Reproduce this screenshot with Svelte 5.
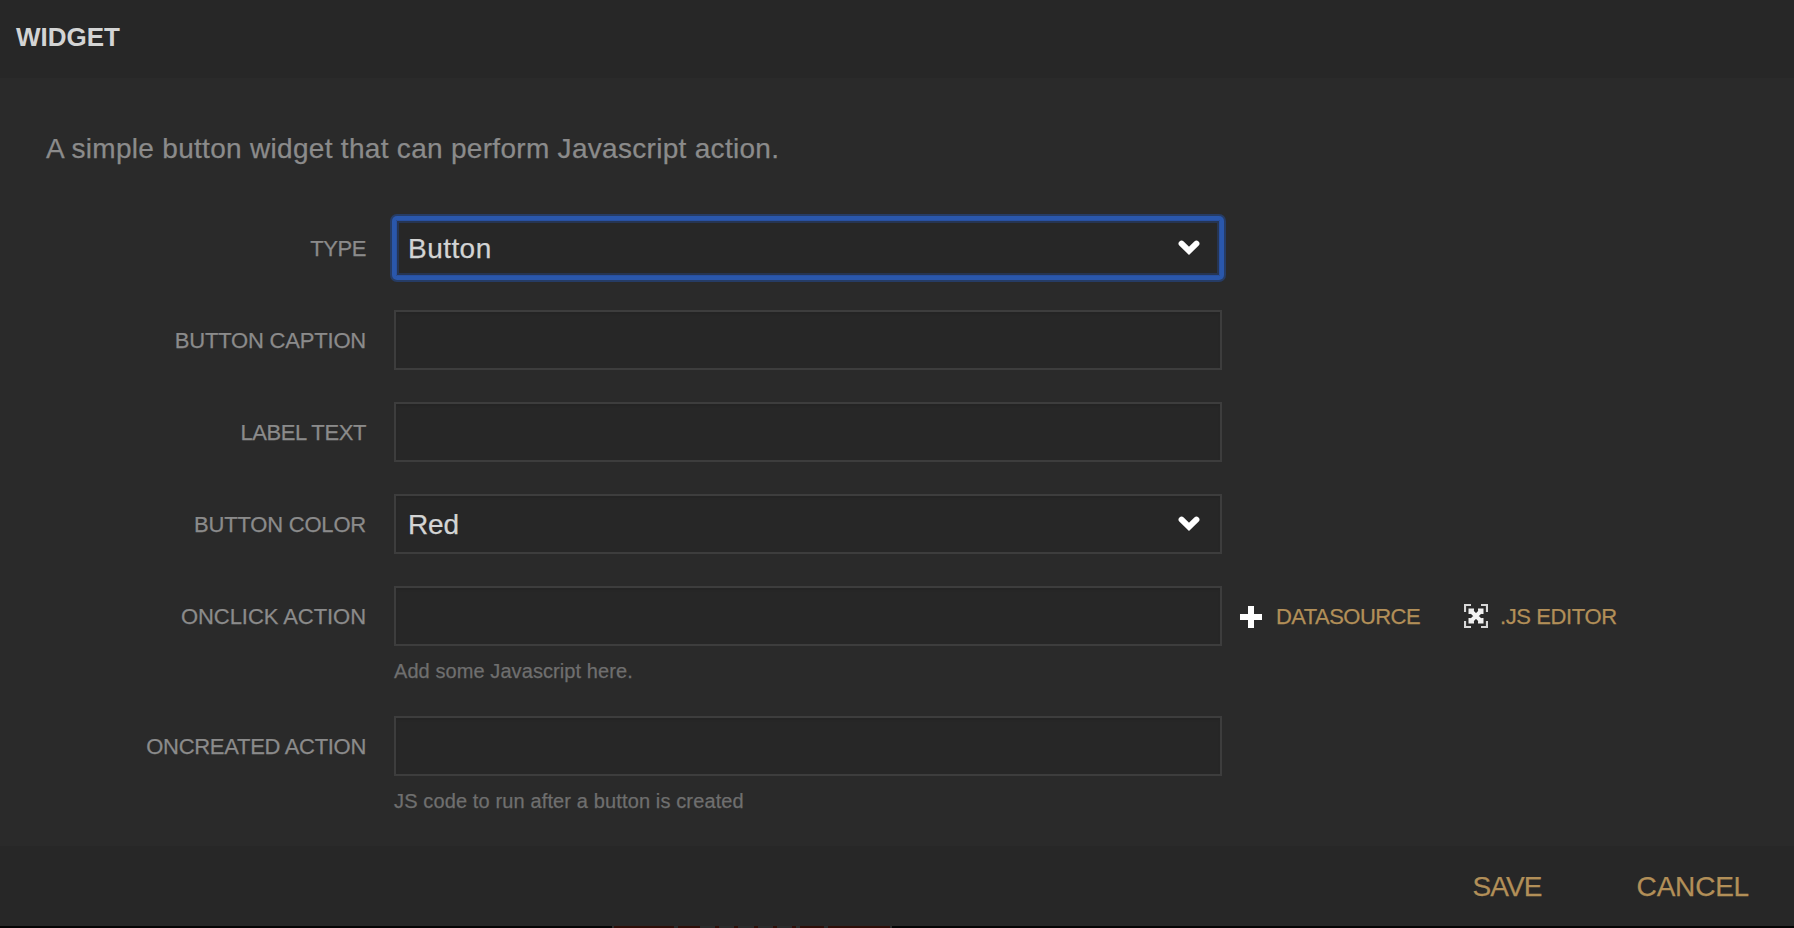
<script>
  const fields = [
    { label: 'TYPE', track: -0.4, select: true, value: 'Button', valueTrack: 0.45, focused: true },
    { label: 'BUTTON CAPTION', track: -0.2 },
    { label: 'LABEL TEXT', track: -0.4 },
    { label: 'BUTTON COLOR', track: -0.2, select: true, value: 'Red', valueTrack: -0.1 },
    { label: 'ONCLICK ACTION', track: -0.05, help: 'Add some Javascript here.', helpTrack: 0.08, tools: true },
    { label: 'ONCREATED ACTION', track: -0.3, help: 'JS code to run after a button is created', helpTrack: 0.13 }
  ];
</script>

<div class="dialog">
  <header><h2>WIDGET</h2></header>

  <main>
    <p class="description">A simple button widget that can perform Javascript action.</p>
    {#each fields as f}
      <div class="row" class:with-help={f.help}>
        <span class="label" style="letter-spacing: {f.track}px">{f.label}</span>
        <div class="control">
          <div class="box" class:focused={f.focused}>
            {#if f.select}
              <span class="value" style="letter-spacing: {f.valueTrack}px">{f.value}</span>
              <svg class="chevron" width="24" height="18" viewBox="0 0 24 18">
                <path d="M4.600 4.600 L12 11.800 L19.400 4.600" fill="none" stroke="#fff" stroke-width="6" stroke-linecap="round" />
              </svg>
            {/if}
          </div>
          {#if f.help}<div class="help" style="letter-spacing: {f.helpTrack}px">{f.help}</div>{/if}
        </div>
        {#if f.tools}
          <div class="tools">
            <span class="tool">
              <svg class="plus" width="24" height="24" viewBox="0 0 24 24">
                <path d="M9 1h6v8h8v6h-8v8H9v-8H1V9h8z" fill="#fff" />
              </svg>
              <span class="datasource">DATASOURCE</span>
            </span>
            <span class="tool editor">
              <svg width="24" height="24" viewBox="0 0 24 24">
                <path d="M1 8V1h6M17 1h6v7M23 17v6h-6M7 23H1v-6" fill="none" stroke="#d8d8d8" stroke-width="2.200" />
                <path d="M7 7 17 17M17 7 7 17" stroke="#f4f4f4" stroke-width="4" />
                <path d="M4.500 4.500h5.500v2L6.500 10h-2zM19.500 4.500v5.500h-2L14 6.500v-2zM19.500 19.500H14v-2l3.500-3.500h2zM4.500 19.500V14h2l3.500 3.500v2z" fill="#f0f0f0" />
              </svg>
              <span class="js">.JS EDITOR</span>
            </span>
          </div>
        {/if}
      </div>
    {/each}
  </main>

  <footer>
    <span class="save">SAVE</span>
    <span class="cancel">CANCEL</span>
  </footer>
  <div class="backdrop"><div class="pane"></div></div>
</div>

<style>
  :global(body) {
    margin: 0;
    background: #000;
    overflow: hidden;
  }
  .dialog {
    width: 1794px;
    height: 928px;
    display: flex;
    flex-direction: column;
    background: #2a2a2a;
    color: #8b8b8b;
    font-family: "Liberation Sans", Arial, sans-serif;
    -webkit-text-stroke: 0.25px currentColor;
  }
  header {
    height: 78px;
    box-sizing: border-box;
    padding: 21px 0 0 16px;
    background: #272727;
  }
  h2 {
    margin: 0;
    font-size: 26px;
    line-height: 32px;
    color: #d3d4d4;
    -webkit-text-stroke: 0;
  }
  main {
    height: 768px;
    box-sizing: border-box;
  }
  .description {
    margin: 0;
    padding: 55px 0 0 46px;
    height: 85px;
    font-size: 28px;
    line-height: 32px;
    letter-spacing: 0.3px;
  }
  .row {
    display: flex;
    height: 92px;
  }
  .row.with-help {
    height: 130px;
  }
  .label {
    width: 366px;
    margin-right: 28px;
    font-size: 22px;
    line-height: 62px;
    text-align: right;
    white-space: nowrap;
  }
  .control {
    width: 828px;
  }
  .box {
    height: 60px;
    box-sizing: border-box;
    display: flex;
    align-items: center;
    justify-content: space-between;
    border: 2px solid #3d3d3d;
    background: #272727;
    padding: 0 19px 0 12px;
    font-size: 28px;
    line-height: 32px;
    color: #d3d4d4;
    box-shadow: inset 0 2px 2px rgba(0, 0, 0, 0.08);
  }
  .value {
    padding-top: 2px;
  }
  .box.focused {
    border-color: #2a57ab;
    box-shadow: 0 0 0 2px #2a57ab, 0 0 0 4px #263c65, inset 0 0 0 1px #2850a0, inset 0 0 0 3px #263553;
    border-radius: 3px;
  }
  .help {
    margin-top: 13px;
    font-size: 20px;
    line-height: 24px;
    color: #6f6f6f;
  }
  .tools {
    display: flex;
    height: 60px;
    align-items: center;
    padding-left: 17px;
    font-size: 22px;
    color: #b28f58;
  }
  .tool {
    display: flex;
    align-items: center;
    gap: 13px;
  }
  .plus {
    margin-top: 2px;
  }
  .tool.editor {
    margin-left: 43px;
    gap: 12px;
  }
  .datasource {
    width: 145px;
    padding-top: 1px;
    letter-spacing: -0.55px;
  }
  .js {
    padding-top: 1px;
    letter-spacing: -0.4px;
  }
  footer {
    height: 80px;
    display: flex;
    align-items: center;
    justify-content: flex-end;
    gap: 95px;
    padding-right: 45px;
    background: #272727;
    font-size: 28px;
    color: #b28f58;
  }
  .save {
    padding-top: 1px;
    letter-spacing: -0.9px;
  }
  .cancel {
    padding-top: 1px;
    letter-spacing: -0.2px;
  }
  .backdrop {
    height: 2px;
    padding-left: 612px;
    background: #040404;
  }
  .pane {
    width: 280px;
    height: 2px;
    background: linear-gradient(90deg, #2b2b2b 2px, #2e0e08 2px 62px, #2b2b2b 62px 66px, #2e0e08 66px 88px, #2b2b2b 88px 103px, #2e0e08 103px 107px, #2b2b2b 107px 122px, #2e0e08 122px 126px, #2b2b2b 126px 142px, #2e0e08 142px 146px, #2b2b2b 146px 161px, #2e0e08 161px 165px, #2b2b2b 165px 180px, #2e0e08 180px 184px, #2b2b2b 184px 188px, #2e0e08 188px 212px, #2b2b2b 212px 216px, #2e0e08 216px 278px, #2b2b2b 278px);
  }
</style>
